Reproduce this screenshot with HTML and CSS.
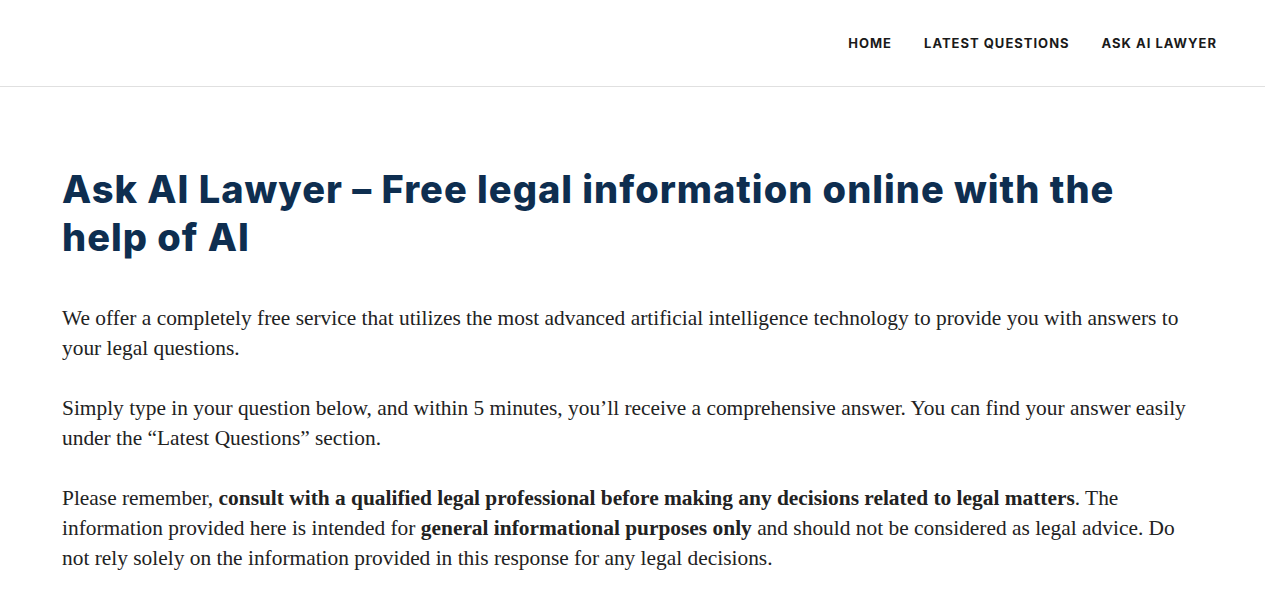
FILE: index.html
```html
<!DOCTYPE html>
<html lang="en">
<head>
<meta charset="utf-8">
<title>Ask AI Lawyer</title>
<link rel="stylesheet" href="styles.css">
</head>
<body>
<div class="page">
  <header class="site-header">
    <nav class="nav">
      <a class="nav-link" href="#">Home</a>
      <a class="nav-link" href="#">Latest Questions</a>
      <a class="nav-link" href="#">Ask AI Lawyer</a>
    </nav>
  </header>
  <main class="content">
    <h1 class="title">Ask AI Lawyer – Free legal information online with the help of AI</h1>
    <p class="text">We offer a completely free service that utilizes the most advanced artificial intelligence technology to provide you with answers to your legal questions.</p>
    <p class="text">Simply type in your question below, and within 5 minutes, you’ll receive a comprehensive answer. You can find your answer easily under the “Latest Questions” section.</p>
    <p class="text">Please remember, <strong>consult with a qualified legal professional before making any decisions related to legal matters</strong>. The information provided here is intended for <strong>general informational purposes only</strong> and should not be considered as legal advice. Do not rely solely on the information provided in this response for any legal decisions.</p>
  </main>
</div>
</body>
</html>
```
FILE: styles.css
```css
html, body {
  margin: 0;
  padding: 0;
  background: #fff;
}
body {
  overflow: hidden;
}
.page {
  width: 1265px;
}
.site-header {
  height: 86px;
  border-bottom: 1px solid #e0e0e0;
  display: flex;
  align-items: center;
  justify-content: flex-end;
  padding: 0 48px;
}
.nav {
  display: flex;
  gap: 32px;
}
.nav-link {
  font-family: Inter, "Liberation Sans", sans-serif;
  font-weight: 700;
  font-size: 13px;
  letter-spacing: 1px;
  text-transform: uppercase;
  color: #1a1a1a;
  text-decoration: none;
}
.content {
  padding: 78px 62px 0 62px;
}
.title {
  font-family: Inter, "Liberation Sans", sans-serif;
  font-weight: 800;
  font-size: 38px;
  line-height: 48px;
  letter-spacing: 1px;
  color: #0e2e50;
  margin: 0 0 42px 0;
}
.text {
  font-family: "Liberation Serif", serif;
  font-size: 21.4px;
  line-height: 30px;
  color: #222;
  margin: 0 0 30px 0;
}
.text strong {
  font-weight: 700;
}
```
